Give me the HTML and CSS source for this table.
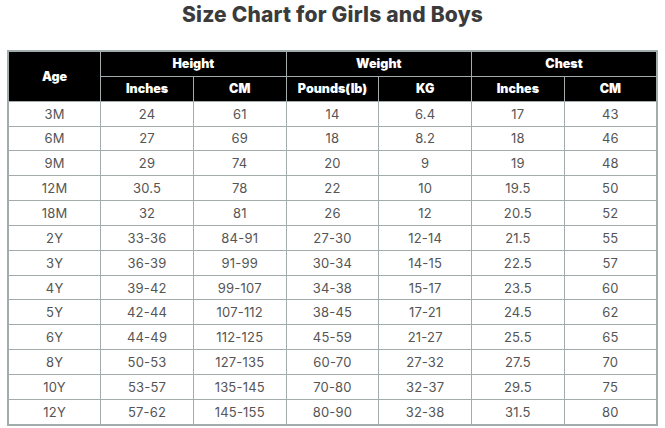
FILE: index.html
```html
<!DOCTYPE html>
<html>
<head>
<meta charset="utf-8">
<link rel="stylesheet" href="styles.css">
</head>
<body>
<h1 class="title">Size Chart for Girls and Boys</h1>
<table class="chart">
  <colgroup>
    <col><col><col><col><col><col><col>
  </colgroup>
  <thead>
    <tr>
      <th rowspan="2">Age</th>
      <th colspan="2">Height</th>
      <th colspan="2">Weight</th>
      <th colspan="2">Chest</th>
    </tr>
    <tr>
      <th>Inches</th><th>CM</th><th>Pounds(lb)</th><th>KG</th><th>Inches</th><th>CM</th>
    </tr>
  </thead>
  <tbody>
    <tr><td>3M</td><td>24</td><td>61</td><td>14</td><td>6.4</td><td>17</td><td>43</td></tr>
    <tr><td>6M</td><td>27</td><td>69</td><td>18</td><td>8.2</td><td>18</td><td>46</td></tr>
    <tr><td>9M</td><td>29</td><td>74</td><td>20</td><td>9</td><td>19</td><td>48</td></tr>
    <tr><td>12M</td><td>30.5</td><td>78</td><td>22</td><td>10</td><td>19.5</td><td>50</td></tr>
    <tr><td>18M</td><td>32</td><td>81</td><td>26</td><td>12</td><td>20.5</td><td>52</td></tr>
    <tr><td>2Y</td><td>33-36</td><td>84-91</td><td>27-30</td><td>12-14</td><td>21.5</td><td>55</td></tr>
    <tr><td>3Y</td><td>36-39</td><td>91-99</td><td>30-34</td><td>14-15</td><td>22.5</td><td>57</td></tr>
    <tr><td>4Y</td><td>39-42</td><td>99-107</td><td>34-38</td><td>15-17</td><td>23.5</td><td>60</td></tr>
    <tr><td>5Y</td><td>42-44</td><td>107-112</td><td>38-45</td><td>17-21</td><td>24.5</td><td>62</td></tr>
    <tr><td>6Y</td><td>44-49</td><td>112-125</td><td>45-59</td><td>21-27</td><td>25.5</td><td>65</td></tr>
    <tr><td>8Y</td><td>50-53</td><td>127-135</td><td>60-70</td><td>27-32</td><td>27.5</td><td>70</td></tr>
    <tr><td>10Y</td><td>53-57</td><td>135-145</td><td>70-80</td><td>32-37</td><td>29.5</td><td>75</td></tr>
    <tr><td>12Y</td><td>57-62</td><td>145-155</td><td>80-90</td><td>32-38</td><td>31.5</td><td>80</td></tr>
  </tbody>
</table>
</body>
</html>
```
FILE: styles.css
```css
html, body {
  margin: 0;
  padding: 0;
  background: #ffffff;
}
body {
  font-family: Inter, "Noto Sans", sans-serif;
}
.title {
  margin: 2px 0 0 0;
  height: 48px;
  text-align: center;
  font-size: 21px;
  line-height: 26px;
  font-weight: 800;
  color: #3b3b3b;
  letter-spacing: 0.2px;
}
.chart {
  margin-left: 7px;
  width: 651px;
  border-collapse: collapse;
  table-layout: fixed;
  border: 2px solid #a3acac;
}
.chart th,
.chart td {
  border: 1px solid #a3acac;
  text-align: center;
  padding: 0;
  height: 23.85px;
}
.chart th {
  background: #000000;
  color: #ffffff;
  font-size: 12.5px;
  font-weight: 900;
}
.chart td {
  color: #555555;
  font-size: 13px;
  font-weight: 400;
  letter-spacing: 0.2px;
}
```
